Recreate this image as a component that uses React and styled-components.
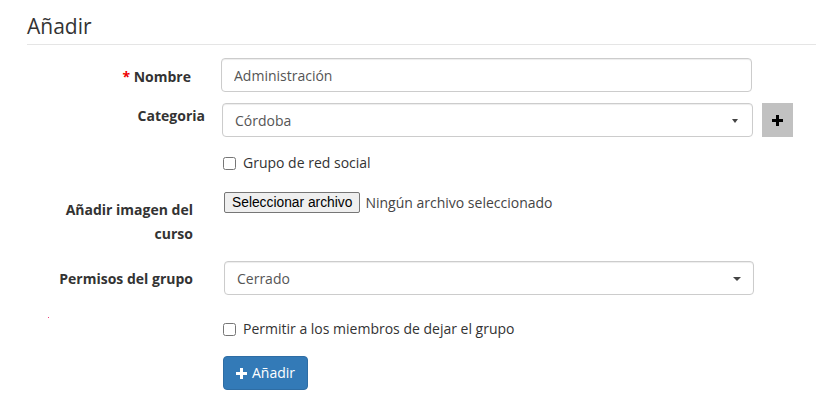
import styled, { createGlobalStyle } from "styled-components";

const GlobalStyle = createGlobalStyle`
  body {
    margin: 0;
    background: #ffffff;
  }
`;

const PlusGlyph = ({ color }) => (
  <svg width="11" height="11" viewBox="0 0 11 11">
    <rect x="4" y="0" width="3" height="11" fill={color} />
    <rect x="0" y="4" width="11" height="3" fill={color} />
  </svg>
);

const App = () => {
  return (
    <Page>
      <GlobalStyle />
      <Legend>Añadir</Legend>
      <Form onSubmit={(e) => e.preventDefault()}>
        <Row $top={13} $shift={-2}>
          <Label>
            <Required>*</Required> Nombre
          </Label>
          <TextInput defaultValue="Administración" $width={531} />
        </Row>

        <Row $top={11} $shift={-1}>
          <Label $pad={1} $end={-13}>
            Categoria
          </Label>
          <Controls>
            <Select $width={531} $arrow={14}>
              <span>Córdoba</span>
              <Caret />
            </Select>
            <AddButton type="button">
              <PlusGlyph color="#000" />
            </AddButton>
          </Controls>
        </Row>

        <Row $top={16}>
          <span />
          <Check>
            <input type="checkbox" />
            Grupo de red social
          </Check>
        </Row>

        <Row $top={19}>
          <Label $pad={6}>Añadir imagen del curso</Label>
          <FileField>
            <FileButton type="button">Seleccionar archivo</FileButton>
            <FileName>Ningún archivo seleccionado</FileName>
          </FileField>
        </Row>

        <Row $top={15} $shift={1}>
          <Label $pad={6} $end={1}>
            Permisos del grupo
          </Label>
          <Select $width={530} $arrow={12}>
            <span>Cerrado</span>
            <Caret $wide />
          </Select>
        </Row>

        <Row $top={24}>
          <Speck />
          <Check>
            <input type="checkbox" />
            Permitir a los miembros de dejar el grupo
          </Check>
        </Row>

        <Row $top={17}>
          <span />
          <div>
            <SubmitButton type="submit">
              <PlusGlyph color="#fff" />
              Añadir
            </SubmitButton>
          </div>
        </Row>
      </Form>
    </Page>
  );
};

const Page = styled.div`
  padding: 11px 0 0 27px;

  font-family: "Open Sans", "Liberation Sans", sans-serif;
  font-size: 14px;
  color: #333;
`;

const Legend = styled.h2`
  margin: 0;
  padding-bottom: 3px;

  font-size: 21px;
  font-weight: 400;
  line-height: 30px;

  color: #333;
  border-bottom: 1px solid #e5e5e5;
`;

const Form = styled.form`
  display: flex;
  flex-direction: column;
  padding-left: 16px;
`;

const Row = styled.div`
  display: grid;
  grid-template-columns: 150px auto;
  column-gap: 30px;
  align-items: start;

  margin-top: ${(props) => props.$top}px;
  margin-left: ${(props) => props.$shift || 0}px;
`;

const Label = styled.label`
  padding-top: ${(props) => props.$pad ?? 7}px;
  margin-right: ${(props) => props.$end || 0}px;

  text-align: right;
  font-weight: 700;
  line-height: 24px;
  color: #333;
`;

const Required = styled.span`
  color: #e00;
`;

const TextInput = styled.input`
  width: ${(props) => props.$width}px;
  height: 34px;
  box-sizing: border-box;
  padding: 6px 12px;

  font-family: inherit;
  font-size: 14px;
  color: #555;

  border: 1px solid #ccc;
  border-radius: 4px;
  box-shadow: inset 0 1px 1px rgba(0, 0, 0, 0.075);
  outline: none;
`;

const Controls = styled.div`
  display: flex;
  align-items: flex-start;
  gap: 9px;
`;

const Select = styled.div`
  width: ${(props) => props.$width}px;
  height: 34px;
  box-sizing: border-box;
  padding: 0 ${(props) => props.$arrow}px 0 12px;

  display: flex;
  align-items: center;
  justify-content: space-between;

  color: #555;
  border: 1px solid #ccc;
  border-radius: 4px;
  box-shadow: inset 0 1px 1px rgba(0, 0, 0, 0.075);
`;

const Caret = styled.span`
  width: 0;
  height: 0;
  margin-top: 1px;

  border-left: ${(props) => (props.$wide ? 4 : 3.5)}px solid transparent;
  border-right: ${(props) => (props.$wide ? 4 : 3.5)}px solid transparent;
  border-top: 4px solid #444;
`;

const AddButton = styled.button`
  width: 31px;
  height: 34px;
  padding: 0;

  display: flex;
  align-items: center;
  justify-content: center;

  background: #c1c1c1;
  border: none;
  border-radius: 0;
`;

const Check = styled.label`
  display: flex;
  align-items: center;
  line-height: 20px;
  color: #333;

  input {
    width: 13px;
    height: 13px;
    margin: 0 7px 0 0;
  }
`;

const FileField = styled.div`
  display: flex;
  align-items: center;
  gap: 5px;
  padding-left: 1px;
`;

const FileButton = styled.button`
  height: 21px;
  padding: 1px 7px;

  font-family: "Liberation Sans", Arial, sans-serif;
  font-size: 13.8px;
  color: #000;

  background: #efefef;
  border: 1px solid #767676;
  border-radius: 2px;
`;

const FileName = styled.span`
  line-height: 20px;
  color: #444;
`;

const Speck = styled.span`
  display: block;
  width: 1px;
  height: 1px;
  margin: -2px 0 0 5px;
  background: #f0407a;
`;

const SubmitButton = styled.button`
  height: 34px;
  padding: 6px 12px;

  display: inline-flex;
  align-items: center;
  gap: 5px;

  font-family: "Open Sans", "Liberation Sans", sans-serif;
  font-size: 14px;
  line-height: 20px;
  color: #fff;

  background: #337ab7;
  border: 1px solid #2e6da4;
  border-radius: 4px;
`;

export default App;
